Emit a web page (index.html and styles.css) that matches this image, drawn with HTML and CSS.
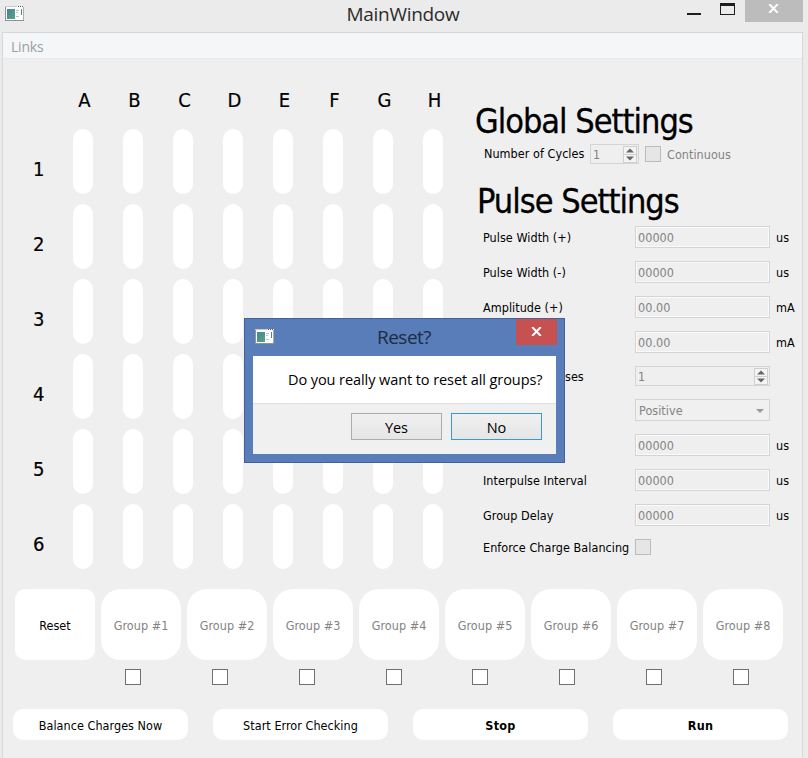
FILE: index.html
```html
<!DOCTYPE html>
<html lang="en">
<head>
<meta charset="utf-8">
<title>MainWindow</title>
<link rel="stylesheet" href="styles.css">
</head>
<body>
<div class="window">
  <header class="titlebar">
    <svg class="app-icon" viewBox="0 0 19 16"><use href="#app"/></svg>
    <h1 class="title">MainWindow</h1>
    <div class="controls">
      <svg class="min" viewBox="0 0 14 2"><path d="M0 0h14v2H0z" fill="#1e1e1e"/></svg>
      <svg class="max" viewBox="0 0 15 12"><path d="M0 0h15v12H0zM1 3v8h13V3z" fill="#1e1e1e" fill-rule="evenodd"/></svg>
      <div class="close"><svg viewBox="0 0 11 9"><path d="M1.2 0l8.6 9M9.8 0L1.2 9" stroke="#fff" stroke-width="2"/></svg></div>
    </div>
  </header>
  <main class="client">
    <nav class="menubar"><span class="menu">Links</span></nav>
    <div class="upper">
      <section class="matrix" id="matrix"></section>
      <section class="settings">
        <h2 class="heading global">Global Settings</h2>
        <div class="cycles">
          <span class="label">Number of Cycles</span>
          <div class="spin small"><span>1</span><i class="arrows"><svg viewBox="0 0 12 15"><use href="#updown"/></svg></i></div>
          <i class="check off"></i><span class="muted">Continuous</span>
        </div>
        <h2 class="heading pulse">Pulse Settings</h2>
        <div class="row"><span class="label">Pulse Width (+)</span><div class="edit">00000</div><span class="unit">us</span></div>
        <div class="row"><span class="label">Pulse Width (-)</span><div class="edit">00000</div><span class="unit">us</span></div>
        <div class="row"><span class="label">Amplitude (+)</span><div class="edit">00.00</div><span class="unit">mA</span></div>
        <div class="row"><span class="label"></span><div class="edit">00.00</div><span class="unit">mA</span></div>
        <div class="row short"><span class="label tail">ses</span><div class="spin"><span>1</span><i class="arrows"><svg viewBox="0 0 12 15"><use href="#updown"/></svg></i></div></div>
        <div class="row"><span class="label"></span><div class="combo"><span>Positive</span><svg viewBox="0 0 8 4"><path d="M0 0h8L4 4z" fill="#9a9a9a"/></svg></div></div>
        <div class="row"><span class="label"></span><div class="edit">00000</div><span class="unit">us</span></div>
        <div class="row"><span class="label">Interpulse Interval</span><div class="edit">00000</div><span class="unit">us</span></div>
        <div class="row"><span class="label">Group Delay</span><div class="edit">00000</div><span class="unit">us</span></div>
        <div class="row last"><span class="label">Enforce Charge Balancing</span><i class="check off"></i></div>
      </section>
    </div>
    <div class="groups">
      <div class="group reset">Reset</div>
      <div class="group">Group #1</div><div class="group">Group #2</div><div class="group">Group #3</div><div class="group">Group #4</div>
      <div class="group">Group #5</div><div class="group">Group #6</div><div class="group">Group #7</div><div class="group">Group #8</div>
    </div>
    <div class="checks"><i class="check"></i><i class="check"></i><i class="check"></i><i class="check"></i><i class="check"></i><i class="check"></i><i class="check"></i><i class="check"></i></div>
    <div class="actions">
      <div class="action">Balance Charges Now</div><div class="action">Start Error Checking</div>
      <div class="action strong">Stop</div><div class="action strong">Run</div>
    </div>
  </main>
</div>

<div class="dialog">
  <div class="dialog-bar">
    <svg class="app-icon" viewBox="0 0 19 16"><use href="#app"/></svg>
    <span class="dialog-title">Reset?</span>
    <div class="dialog-close"><svg viewBox="0 0 11 9"><path d="M1.2 0l8.6 9M9.8 0L1.2 9" stroke="#fff" stroke-width="2"/></svg></div>
  </div>
  <div class="dialog-body">
    <p class="message">Do you really want to reset all groups?</p>
    <div class="buttons"><div class="button">Yes</div><div class="button default">No</div></div>
  </div>
</div>

<svg class="defs">
  <defs>
    <linearGradient id="teal" x2="1" y2="1"><stop offset="0" stop-color="#4a8198"/><stop offset="1" stop-color="#55a583"/></linearGradient>
    <g id="app">
      <path d="M0 0h19v15H0z" fill="#fdfdfd"/>
      <path d="M0 0h1v15H0z" fill="#8f9696"/><path d="M0 14h19v1H0z" fill="#8b9494"/><path d="M18 1h1v13h-1z" fill="#a9aeae"/>
      <path d="M0 0h12v1H0z" fill="#c6caca"/><path d="M13 0h1v1h-1zM15 0h1v1h-1zM17 0h1v1h-1z" fill="#555"/>
      <path d="M2 3h8v10H2z" fill="url(#teal)"/>
      <path d="M11 4h3v1h-3zM11 6h2v1h-2zM11 10h3v1h-3z" fill="#b9c4c6"/><path d="M16 3h1v6h-1z" fill="#5d7c8a"/>
    </g>
    <g id="updown"><path d="M2 5.5L6 1.5l4 4zM2 9.5l4 4 4-4z" fill="#666"/><path d="M0 7.5h12" stroke="#d0d0d0"/></g>
  </defs>
</svg>
<script src="matrix.js"></script>
</body>
</html>
```
FILE: matrix.js
```js
const matrix = document.getElementById('matrix');
const add = (cls, text) => {
  const el = document.createElement('div');
  el.className = cls;
  el.textContent = text;
  matrix.append(el);
};
add('corner', '');
for (const letter of 'ABCDEFGH') add('col', letter);
for (let row = 1; row <= 6; row++) {
  add('num', row);
  for (let c = 0; c < 8; c++) add('pill', '');
}
```
FILE: styles.css
```css
* { box-sizing: border-box; margin: 0; padding: 0; }
body { width: 808px; height: 758px; overflow: hidden; background: #ebebeb; color: #000; font: 12.5px/16px "DejaVu Sans Condensed", "DejaVu Sans", sans-serif; font-stretch: condensed; letter-spacing: 0.04px; white-space: nowrap; }
svg { display: block; }
.defs { position: absolute; width: 0; height: 0; }
.window { height: 758px; display: flex; flex-direction: column; }
.titlebar { height: 32px; display: grid; grid-template-columns: 130px 1fr 132px; padding: 0 5px 0 5px; align-items: start; }
.app-icon { width: 19px; height: 16px; }
.titlebar .app-icon { margin-top: 6px; }
.title { font: 19px/28px "Open Sans", "Noto Sans", sans-serif; text-align: center; color: #2b2b2b; letter-spacing: -0.3px; }
.controls { display: flex; justify-content: flex-end; }
.min { width: 14px; height: 2px; margin: 13px 19px 0 0; }
.max { width: 15px; height: 12px; margin: 3px 10px 0 0; }
.close { width: 58px; height: 22px; background: #bcbcbc; padding: 4px 0 0 23px; }
.close svg, .dialog-close svg { width: 11px; height: 9px; }
.client { height: 726px; width: 801px; margin-left: 2px; border: 1px solid #d5d7da; border-bottom: 0; background: #efefef; }
.menubar { height: 26px; background: #f5f6f8; border-bottom: 1px solid #e8e9eb; padding: 5px 0 0 8px; }
.menu { font: 14px/18px "Open Sans", "Noto Sans", sans-serif; color: #9c9ea1; letter-spacing: -0.2px; }
.upper { display: flex; height: 530px; }
.matrix { width: 472px; display: grid; grid-template-columns: 45px repeat(8, 50px); grid-template-rows: 65px repeat(6, 75px); }
.col, .num { font-size: 20px; line-height: 24px; letter-spacing: 0; -webkit-text-stroke: 0.2px #000; }
.col { padding-top: 29px; text-align: center; width: 73px; }
.num { padding: 33px 0 0 30px; }
.pill { width: 20px; height: 65px; border-radius: 10px; background: #fff; margin: 5px 0 0 25px; }
.settings { flex: 1; }
.heading { font-size: 34px; font-weight: 400; line-height: 42px; letter-spacing: -1px; -webkit-text-stroke: 0.3px #000; }
.global { margin-top: 41px; }
.cycles { display: flex; align-items: center; height: 20px; margin: 2px 0 0 9px; }
.cycles .label { width: 106px; padding-top: 1px; }
.pulse { margin: 16px 0 0 2px; }
.spin { width: 135px; height: 20px; border: 1px solid #d4d4d4; display: flex; justify-content: space-between; padding: 1px 1px 0 2px; color: #838383; line-height: 18px; }
.spin.small { width: 49px; margin-right: 6px; }
.arrows { width: 14px; height: 17px; border: 1px solid #cfcfcf; background: #f4f4f4; }
.arrows svg { width: 12px; height: 15px; }
.check { width: 16px; height: 16px; background: #fff; border: 1px solid #707070; }
.check.off { background: #e6e6e6; border-color: #bcbcbc; }
.muted { color: #838383; margin-left: 6px; padding-top: 1px; }
.row { display: flex; align-items: center; height: 35px; margin-left: 8px; }
.label { width: 152px; height: 18px; padding-top: 2px; }
.tail { padding-left: 82px; }
.unit { margin-left: 6px; height: 18px; padding-top: 2px; }
.pulse + .row { margin-top: -3px; }
.row.short { height: 33px; }
.edit, .combo { width: 135px; height: 22px; border: 1px solid #d4d4d4; box-shadow: inset 0 0 0 1px #fafafa; padding: 3px 0 0 2px; color: #838383; }
.combo { display: flex; justify-content: space-between; background: #f0f0f0; box-shadow: none; padding-left: 3px; }
.combo svg { width: 8px; height: 4px; margin: 6px 5px 0 0; }
.row.last { height: 29px; }
.groups { display: flex; gap: 6px; padding-left: 12px; }
.group { width: 80px; height: 71px; border-radius: 20px; background: #fff; color: #838383; text-align: center; line-height: 73px; }
.reset { border-radius: 10px; color: #000; }
.checks { display: flex; justify-content: space-between; width: 624px; margin: 9px 0 0 122px; }
.actions { display: flex; gap: 25px; margin: 24px 0 0 10px; }
.action { width: 175px; height: 31px; border-radius: 10px; background: #fff; text-align: center; line-height: 33px; }
.strong { font-weight: 700; letter-spacing: 0.3px; }
.dialog { position: absolute; left: 244px; top: 318px; width: 321px; height: 145px; background: #597db9; border: 1px solid #41609c; }
.dialog-bar { display: grid; grid-template-columns: 60px 1fr 64px; height: 37px; padding: 0 7px 0 10px; }
.dialog-bar .app-icon { margin-top: 10px; }
.dialog-title { font: 19px/36px "Open Sans", "Noto Sans", sans-serif; text-align: center; color: #1d2b45; letter-spacing: -0.5px; }
.dialog-close { justify-self: end; width: 41px; height: 26px; background: #c75050; padding: 8px 0 0 15px; }
.dialog-body { width: 303px; height: 98px; margin-left: 8px; background: #f0f0f0; font: 14.5px/18px "Open Sans", "Noto Sans", sans-serif; letter-spacing: -0.08px; }
.message { height: 48px; background: #fff; border-bottom: 1px solid #dfdfdf; padding: 15px 0 0 35px; }
.buttons { display: flex; justify-content: flex-end; gap: 9px; padding: 9px 14px 0 0; }
.button { width: 91px; height: 27px; border: 1px solid #acacac; background: linear-gradient(#f0f0f0, #e5e5e5); text-align: center; line-height: 27px; }
.button.default { border-color: #3c96dc; }
```
